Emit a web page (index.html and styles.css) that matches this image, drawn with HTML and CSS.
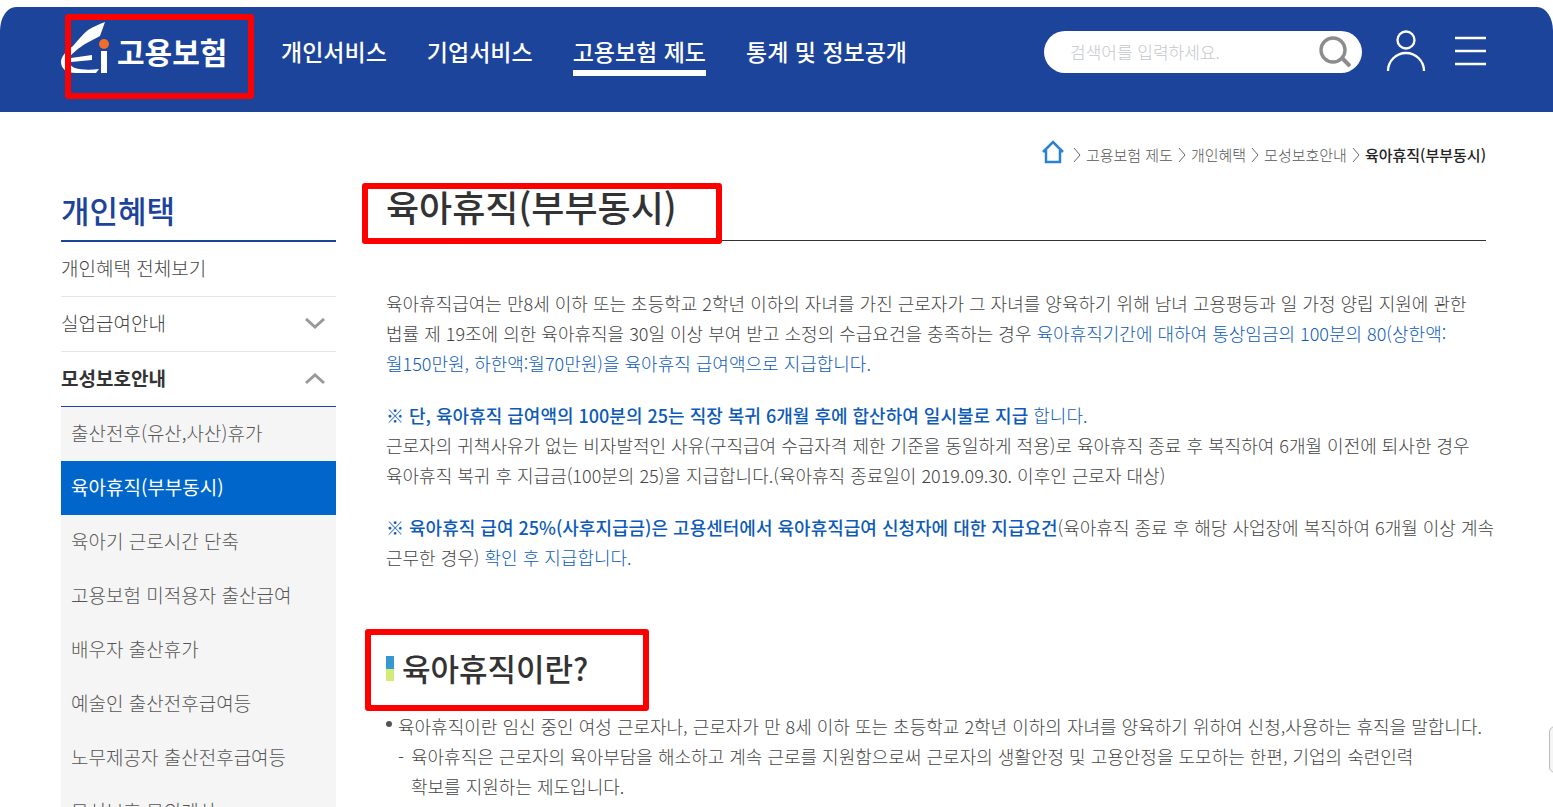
FILE: index.html
```html
<!DOCTYPE html>
<html lang="ko">
<head>
    <meta charset="UTF-8">
    <meta name="viewport" content="width=device-width, initial-scale=1.0">
    <title>육아휴직(부부동시) - 고용보험</title>
    <link rel="stylesheet" href="styles.css">
</head>
<body>
    <header class="header">
        <a href="#" class="logo">
            <svg width="48" height="51" viewBox="0 0 48 51" aria-hidden="true">
                <path fill="#fff" d="M44 0 C38 2 32 5 27 8 C21 13 17 18 12 24 C5 29 0 35 0 40 C0 47 6 51 15 51 L35 51 L38 47 C30 48 20 48 14 46 C9 44 7 41 8 36 C11 31 18 26 24 22 L39 14 Z"/>
                <path fill="#fff" d="M10 36 L31 33 L31 38 L10 40 Z"/>
                <rect fill="#fff" x="40" y="29" width="6" height="22"/>
                <circle fill="#f26c2a" cx="43" cy="22" r="5"/>
            </svg>
            <span class="logo-text">고용보험</span>
            <span class="mark mark-logo"></span>
        </a>
        <nav class="nav">
            <a href="#">개인서비스</a>
            <a href="#">기업서비스</a>
            <a href="#" class="on">고용보험 제도</a>
            <a href="#">통계 및 정보공개</a>
        </nav>
        <form class="search">
            <input type="text" placeholder="검색어를 입력하세요." aria-label="검색어">
            <button type="button" aria-label="검색">
                <svg width="32" height="32" viewBox="0 0 32 32" fill="none" stroke="#8c8c8c">
                    <circle cx="14" cy="14" r="12" stroke-width="3.4"/>
                    <path d="M23 22 L31 30" stroke-width="4"/>
                </svg>
            </button>
        </form>
        <button type="button" class="icon-btn user-btn" aria-label="로그인">
            <svg width="40" height="42" viewBox="0 0 40 42" fill="none" stroke="#fff" stroke-width="2.4">
                <circle cx="20" cy="10" r="8.5"/>
                <path d="M2 41 A18 18 0 0 1 38 41"/>
            </svg>
        </button>
        <button type="button" class="icon-btn" aria-label="전체메뉴">
            <svg width="31" height="30" viewBox="0 0 31 30" stroke="#fff" stroke-width="2.4">
                <path d="M0 2 H31 M0 15 H31 M0 28 H31"/>
            </svg>
        </button>
    </header>

    <nav class="breadcrumb">
        <a href="#" class="home" aria-label="홈">
            <svg width="22" height="24" viewBox="0 0 22 24" fill="none" stroke="#2a82d2" stroke-width="2.5">
                <path d="M1 12 L11 2 L21 12 M4 10 V22 H18 V10"/>
            </svg>
        </a>
        <svg class="sep" width="8" height="16" viewBox="0 0 8 16"><path d="M1 1 L7 8 L1 15"/></svg>
        <a href="#">고용보험 제도</a>
        <svg class="sep" width="8" height="16" viewBox="0 0 8 16"><path d="M1 1 L7 8 L1 15"/></svg>
        <a href="#">개인혜택</a>
        <svg class="sep" width="8" height="16" viewBox="0 0 8 16"><path d="M1 1 L7 8 L1 15"/></svg>
        <a href="#">모성보호안내</a>
        <svg class="sep" width="8" height="16" viewBox="0 0 8 16"><path d="M1 1 L7 8 L1 15"/></svg>
        <strong>육아휴직(부부동시)</strong>
    </nav>

    <div class="container">
        <aside class="sidebar">
            <h2>개인혜택</h2>
            <ul class="menu">
                <li><a href="#">개인혜택 전체보기</a></li>
                <li>
                    <a href="#">실업급여안내
                        <svg width="20" height="12" viewBox="0 0 20 12"><path d="M1 1 L10 9 L19 1"/></svg>
                    </a>
                </li>
                <li class="open">
                    <a href="#">모성보호안내
                        <svg width="20" height="12" viewBox="0 0 20 12"><path d="M1 10 L10 2 L19 10"/></svg>
                    </a>
                    <ul class="submenu">
                        <li><a href="#">출산전후(유산,사산)휴가</a></li>
                        <li><a href="#" class="active">육아휴직(부부동시)</a></li>
                        <li><a href="#">육아기 근로시간 단축</a></li>
                        <li><a href="#">고용보험 미적용자 출산급여</a></li>
                        <li><a href="#">배우자 출산휴가</a></li>
                        <li><a href="#">예술인 출산전후급여등</a></li>
                        <li><a href="#">노무제공자 출산전후급여등</a></li>
                        <li><a href="#">모성보호 모의계산</a></li>
                    </ul>
                </li>
            </ul>
        </aside>

        <main class="content">
            <div class="title">
                <h1>육아휴직(부부동시)</h1>
                <span class="mark mark-title"></span>
            </div>

            <p>육아휴직급여는 만8세 이하 또는 초등학교 2학년 이하의 자녀를 가진 근로자가 그 자녀를 양육하기 위해 남녀 고용평등과 일 가정 양립 지원에 관한<br>
            법률 제 19조에 의한 육아휴직을 30일 이상 부여 받고 소정의 수급요건을 충족하는 경우 <span class="blue">육아휴직기간에 대하여 통상임금의 100분의 80(상한액:<br>
            월150만원, 하한액:월70만원)을 육아휴직 급여액으로 지급합니다.</span></p>

            <p><strong>※ 단, 육아휴직 급여액의 100분의 25는 직장 복귀 6개월 후에 합산하여 일시불로 지급</strong> <span class="blue">합니다.</span><br>
            근로자의 귀책사유가 없는 비자발적인 사유(구직급여 수급자격 제한 기준을 동일하게 적용)로 육아휴직 종료 후 복직하여 6개월 이전에 퇴사한 경우<br>
            육아휴직 복귀 후 지급금(100분의 25)을 지급합니다.(육아휴직 종료일이 2019.09.30. 이후인 근로자 대상)</p>

            <p><strong>※ 육아휴직 급여 25%(사후지급금)은 고용센터에서 육아휴직급여 신청자에 대한 지급요건</strong>(육아휴직 종료 후 해당 사업장에 복직하여 6개월 이상 계속<br>
            근무한 경우) <span class="blue">확인 후 지급합니다.</span></p>

            <div class="subtitle">
                <h3>육아휴직이란?</h3>
                <span class="mark mark-subtitle"></span>
            </div>
            <ul class="list">
                <li>육아휴직이란 임신 중인 여성 근로자나, 근로자가 만 8세 이하 또는 초등학교 2학년 이하의 자녀를 양육하기 위하여 신청,사용하는 휴직을 말합니다.
                    <ul>
                        <li>육아휴직은 근로자의 육아부담을 해소하고 계속 근로를 지원함으로써 근로자의 생활안정 및 고용안정을 도모하는 한편, 기업의 숙련인력<br>
                        확보를 지원하는 제도입니다.</li>
                    </ul>
                </li>
            </ul>
        </main>
    </div>

    <button type="button" class="quick" aria-label="퀵메뉴"></button>
</body>
</html>
```
FILE: styles.css
```css
* {
    margin: 0;
    padding: 0;
    box-sizing: border-box;
}
body {
    padding-top: 7px;
    background: #fff;
    color: #444;
    font-family: "Noto Sans CJK KR", sans-serif;
    font-size: 18px;
    font-weight: 300;
    line-height: 30px;
    overflow-x: hidden;
}
a {
    color: inherit;
    text-decoration: none;
}
ul {
    list-style: none;
}
button {
    background: none;
    border: none;
    cursor: pointer;
}
svg {
    display: block;
}

/* Header */
.header {
    display: flex;
    align-items: flex-start;
    height: 105px;
    padding: 15px 67px 0 61px;
    background: #1c449b;
    border-radius: 16px 16px 0 0 / 24px 24px 0 0;
    color: #fff;
}
.logo {
    position: relative;
    display: flex;
    gap: 8px;
    width: 220px;
}
.logo-text {
    padding-top: 9px;
    font-size: 30px;
    font-weight: 700;
    line-height: 40px;
}
.nav {
    display: flex;
    gap: 40px;
    padding-top: 8px;
}
.nav a {
    height: 46px;
    font-size: 23px;
    font-weight: 500;
    line-height: 42px;
    white-space: nowrap;
}
.nav .on {
    border-bottom: 6px solid #fff;
}
.search {
    display: flex;
    align-items: center;
    width: 318px;
    height: 42px;
    margin: 9px 24px 0 auto;
    padding: 0 11px 0 26px;
    background: #fff;
    border-radius: 21px;
}
.search input {
    flex: 1;
    min-width: 0;
    border: none;
    outline: none;
    background: none;
    font: inherit;
    font-size: 17px;
}
.search input::placeholder {
    color: #c4c8cc;
}
.icon-btn {
    margin-top: 14px;
}
.user-btn {
    margin: 8px 29px 0 0;
}

/* Red highlight boxes */
.mark {
    position: absolute;
    border: 6px solid #f00;
    border-radius: 3px;
    pointer-events: none;
}
.mark-logo {
    top: -8px;
    left: 4px;
    width: 189px;
    height: 85px;
}
.mark-title {
    top: 0;
    left: -24px;
    width: 360px;
    height: 61px;
}
.mark-subtitle {
    top: 0;
    left: -21px;
    width: 284px;
    height: 82px;
}

/* Breadcrumb */
.breadcrumb {
    display: flex;
    justify-content: flex-end;
    align-items: center;
    gap: 5px;
    height: 71px;
    padding: 14px 67px 0 61px;
    color: #555;
    font-size: 15px;
}
.breadcrumb .home {
    margin: 0 4px 6px 0;
}
.breadcrumb strong {
    color: #222;
    font-weight: 500;
}
.sep {
    fill: none;
    stroke: #666;
}

.container {
    display: flex;
    gap: 50px;
    padding: 0 67px 40px 61px;
}

/* Left menu */
.sidebar {
    flex: 0 0 275px;
    font-size: 19px;
}
.sidebar h2 {
    height: 59px;
    border-bottom: 2px solid #1c449b;
    color: #1c449b;
    font-size: 31px;
    font-weight: 500;
    line-height: 54px;
}
.menu > li > a {
    display: flex;
    justify-content: space-between;
    align-items: center;
    height: 55px;
    padding: 0 11px 2px 0;
    border-bottom: 1px solid #e5e5ea;
}
.menu > .open > a {
    border-color: #1c449b;
    color: #333;
    font-weight: 700;
}
.menu svg {
    margin-top: 2px;
    fill: none;
    stroke: #999;
    stroke-width: 3;
}
.submenu {
    background: #f5f5f5;
}
.submenu a {
    display: block;
    height: 54px;
    padding: 0 10px;
    color: #555;
    line-height: 52px;
}
.submenu .active {
    background: #06c;
    color: #fff;
    font-weight: 400;
}

/* Content */
.content {
    flex: 1;
    min-width: 0;
}
.title {
    position: relative;
    height: 58px;
    margin-bottom: 47px;
    border-bottom: 1px solid #333;
}
.title h1 {
    color: #333;
    font-size: 36px;
    font-weight: 500;
    line-height: 46px;
}
.content p {
    margin-bottom: 22px;
    white-space: nowrap;
}
.content p strong {
    color: #0d5bb8;
    font-weight: 500;
}
.blue {
    color: #0d5bb8;
}
.subtitle {
    position: relative;
    height: 82px;
    margin-top: 57px;
}
.subtitle h3 {
    display: flex;
    align-items: center;
    gap: 8px;
    color: #333;
    font-size: 31px;
    font-weight: 500;
    line-height: 78px;
}
.subtitle h3::before {
    content: "";
    width: 8px;
    height: 25px;
    background: linear-gradient(#3399d0 50%, #d5eb78 50%);
}
.list {
    white-space: nowrap;
}
.list > li {
    position: relative;
    padding-left: 12px;
}
.list > li::before {
    content: "";
    position: absolute;
    top: 10px;
    left: 0;
    width: 6px;
    height: 6px;
    background: #555;
    border-radius: 50%;
}
.list ul li {
    position: relative;
    padding-left: 13px;
}
.list ul li::before {
    content: "-";
    position: absolute;
    left: 0;
}

.quick {
    position: fixed;
    top: 726px;
    right: -40px;
    width: 44px;
    height: 47px;
    background: #f5f5f5;
    border: 1px solid #bbb;
    border-radius: 6px;
}
```
